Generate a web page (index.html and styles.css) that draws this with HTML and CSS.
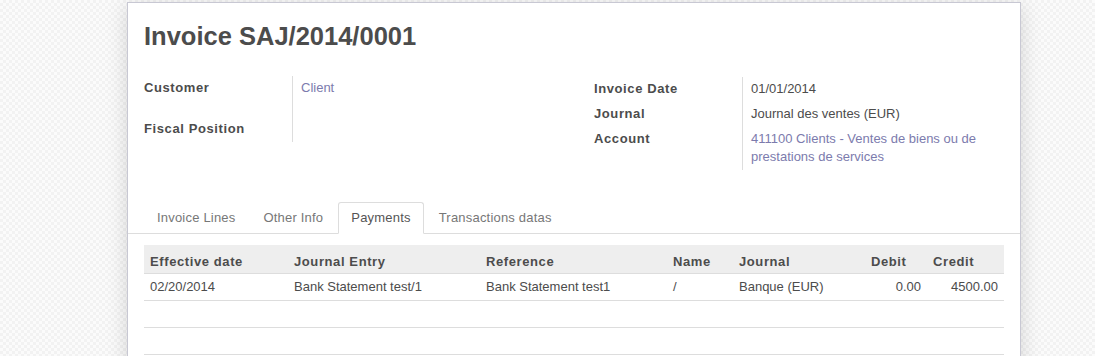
FILE: index.html
```html
<!DOCTYPE html>
<html lang="en">
<head>
    <meta charset="UTF-8">
    <title>Invoice SAJ/2014/0001</title>
    <link rel="stylesheet" href="styles.css">
</head>
<body>
    <div class="sheet">
        <h1 class="title">Invoice SAJ/2014/0001</h1>

        <div class="groups">
            <div class="group">
                <div class="label tall">Customer</div>
                <div class="value tall"><a href="#">Client</a></div>
                <div class="label">Fiscal Position</div>
                <div class="value"></div>
            </div>
            <div class="group right">
                <div class="label">Invoice Date</div>
                <div class="value">01/01/2014</div>
                <div class="label">Journal</div>
                <div class="value">Journal des ventes (EUR)</div>
                <div class="label">Account</div>
                <div class="value"><a href="#">411100 Clients - Ventes de biens ou de prestations de services</a></div>
            </div>
        </div>

        <ul class="tabs">
            <li><a href="#">Invoice Lines</a></li>
            <li><a href="#">Other Info</a></li>
            <li class="active"><a href="#">Payments</a></li>
            <li><a href="#">Transactions datas</a></li>
        </ul>

        <table class="lines">
            <colgroup>
                <col style="width:144px">
                <col style="width:192px">
                <col style="width:187px">
                <col style="width:66px">
                <col style="width:132px">
                <col style="width:62px">
                <col style="width:77px">
            </colgroup>
            <thead>
                <tr>
                    <th>Effective date</th>
                    <th>Journal Entry</th>
                    <th>Reference</th>
                    <th>Name</th>
                    <th>Journal</th>
                    <th>Debit</th>
                    <th>Credit</th>
                </tr>
            </thead>
            <tbody>
                <tr>
                    <td>02/20/2014</td>
                    <td>Bank Statement test/1</td>
                    <td>Bank Statement test1</td>
                    <td>/</td>
                    <td>Banque (EUR)</td>
                    <td class="num">0.00</td>
                    <td class="num">4500.00</td>
                </tr>
                <tr><td>&nbsp;</td><td></td><td></td><td></td><td></td><td></td><td></td></tr>
                <tr><td>&nbsp;</td><td></td><td></td><td></td><td></td><td></td><td></td></tr>
            </tbody>
        </table>
    </div>
</body>
</html>
```

FILE: styles.css
```css
html, body {
    height: 100%;
}

body {
    margin: 0;
    font-family: "Liberation Sans", Arial, sans-serif;
    font-size: 13px;
    color: #4c4c4c;
    background: repeating-conic-gradient(#f2f2f2 0 25%, #fbfbfb 0 50%) 0 0 / 6px 6px;
    overflow: hidden;
}

a {
    color: #7c7bad;
    text-decoration: none;
}

/* feuille principale */
.sheet {
    width: 860px;
    min-height: 400px;
    margin: 2px 0 0 127px;
    padding: 0 16px;
    background: #fff;
    border: 1px solid #c8c8d3;
    box-shadow: 0 4px 20px rgba(0, 0, 0, 0.15);
}

.title {
    margin: 18px 0 0;
    font-size: 25.5px;
    line-height: 30px;
    font-weight: bold;
    color: #4c4c4c;
}

/* groupes de champs */
.groups {
    display: grid;
    grid-template-columns: 450px 1fr;
    margin-top: 25px;
}

.group {
    display: grid;
    grid-template-columns: 149px 1fr;
    align-content: start;
}

.group.right {
    margin-top: 1px;
}

.label {
    padding: 3px 0 4px;
    line-height: 18px;
    font-weight: bold;
    letter-spacing: 0.6px;
    border-right: 1px solid #ddd;
}

.value {
    padding: 3px 8px 4px;
    line-height: 18px;
}

.label.tall,
.value.tall {
    min-height: 34px;
}

/* onglets */
.tabs {
    display: flex;
    list-style: none;
    margin: 32px -16px 0;
    padding: 0 16px;
    border-bottom: 1px solid #ddd;
}

.tabs li {
    margin: 0 2px -1px 0;
}

.tabs a {
    display: block;
    padding: 7px 12px 8px;
    line-height: 15px;
    color: #777;
    letter-spacing: 0.2px;
    border: 1px solid transparent;
    border-radius: 3px 3px 0 0;
}

.tabs .active a {
    color: #555;
    background: #fff;
    border-color: #ddd #ddd transparent;
}

/* tableau des paiements */
.lines {
    width: 860px;
    margin-top: 11px;
    border-collapse: collapse;
    table-layout: fixed;
}

.lines th {
    padding: 9px 6px 3px;
    line-height: 16px;
    text-align: left;
    font-weight: bold;
    letter-spacing: 0.6px;
    background: #eee;
    border-bottom: 1px solid #ddd;
}

.lines td {
    padding: 4px 6px;
    line-height: 18px;
    border-bottom: 1px solid #ddd;
    white-space: nowrap;
}

.lines .num {
    text-align: right;
}
```
